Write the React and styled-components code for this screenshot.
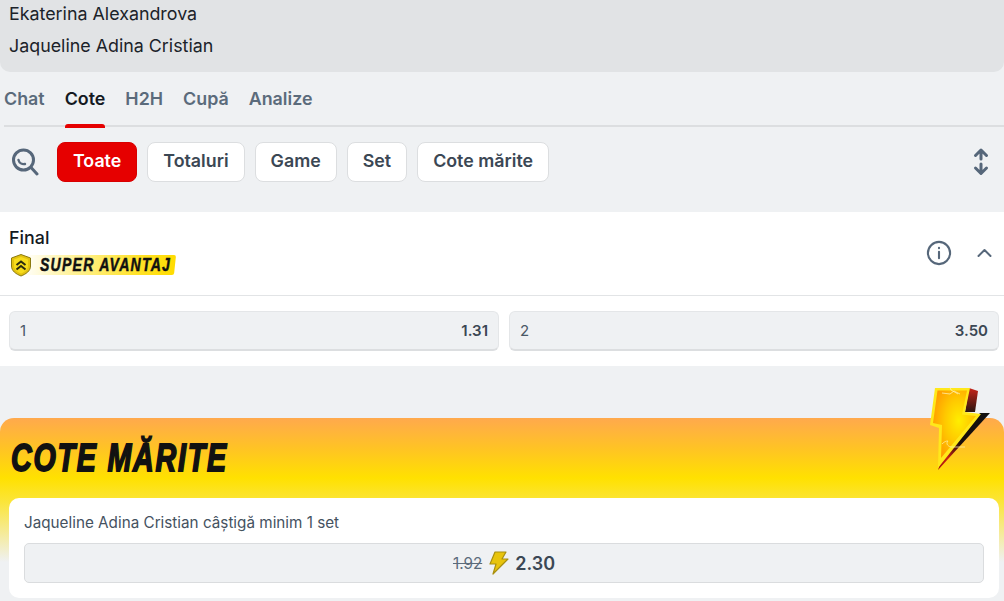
import React from "react";
import styled, { createGlobalStyle } from "styled-components";

const Global = createGlobalStyle`
  html, body { margin: 0; padding: 0; background: #eff1f3; }
  body { font-family: Inter, "Liberation Sans", sans-serif; overflow: hidden; }
  #root { width: 1004px; height: 601px; overflow: hidden; }
`;
const Page = styled.div`display: flex; flex-direction: column; width: 1004px; height: 601px; overflow: hidden; background: #eff1f3;`;
const Header = styled.header`
  height: 72px; flex: none; box-sizing: border-box; background: #e1e3e5; border-radius: 0 0 10px 10px;
  padding: 0 9px; display: flex; flex-direction: column; gap: 10px; color: #1b2229;
`;
const Player = styled.div`font-size: 17.85px; line-height: 22px; margin-top: ${p => p.$first ? "3px" : "0"};`;
const Tabs = styled.nav`
  height: 55px; flex: none; box-sizing: border-box; margin-left: 4px; border-bottom: 2px solid #dcdee0;
  display: flex; gap: 20px; align-items: flex-start;
`;
const Tab = styled.div`
  height: 55px; box-sizing: border-box; padding-top: 16px; position: relative; font-size: 17.85px; line-height: 22px; font-weight: 600;
  color: ${p => p.$active ? "#14191f" : "#5b6b7b"};
  ${p => p.$active && `&::after{content:"";position:absolute;left:0;right:0;bottom:-1px;height:4px;border-radius:3px 3px 0 0;background:#e50000;}`}
`;
const Filters = styled.div`
  height: 40px; flex: none; margin-top: 15px; display: flex; align-items: center; padding: 0 11px; gap: 10px;
`;
const SearchWrap = styled.div`width: 28px; height: 28px; margin-right: 8px; flex: none;`;
const Chip = styled.div`
  height: 40px; box-sizing: border-box; padding: 0 15px 4px; display: flex; align-items: center; border-radius: 8px; font-size: 17.82px; font-weight: 600;
  background: ${p => p.$active ? "#e60000" : "#fff"}; color: ${p => p.$active ? "#fff" : "#3b4754"};
  border: 1px solid ${p => p.$active ? "#d80000" : "#dcdee0"};
`;
const Sort = styled.div`margin-left: auto; margin-right: 2px; width: 20px; height: 30px; flex: none;`;
const Market = styled.section`margin-top: 30px; height: 154px; flex: none; background: #fff;`;
const MarketHead = styled.div`
  height: 84px; box-sizing: border-box; border-bottom: 1px solid #e2e4e6; padding: 15px 9px 0 9px; display: flex; justify-content: space-between;
`;
const MarketTitle = styled.div`font-size: 17.85px; line-height: 22px; font-weight: 500; color: #14191f;`;
const Badge = styled.div`
  margin-top: 5px; display: flex; align-items: center; height: 22px; width: 166px; position: relative;
`;
const BadgeStrip = styled.div`
  position: absolute; left: 14px; right: 0; top: 1px; bottom: 1px; transform: skewX(-6deg); border-radius: 2px;
  background: linear-gradient(90deg, rgba(255,222,0,0) 0%, #fff3a0 30%, #ffe22a 75%, #ffdc00 100%);
`;
const BadgeText = styled.span`
  position: relative; margin-left: 31px; display: inline-block; font-family: "Liberation Sans", sans-serif; font-style: italic; font-weight: 700;
  font-size: 18px; line-height: 22px; color: #111; letter-spacing: 1.6px; -webkit-text-stroke: 0.5px #111; white-space: nowrap; transform: scaleX(0.78); transform-origin: left center;
`;
const HeadIcons = styled.div`display: flex; align-items: center; gap: 19px; height: 52px; margin-right: -1px;`;
const OddsRow = styled.div`display: flex; gap: 10px; padding: 15px 5px 0 9px;`;
const Odd = styled.div`
  flex: 1; height: 40px; box-sizing: border-box; background: #eff1f3; border: 1px solid #e4e6e8; border-bottom: 2px solid #dcdee0; border-radius: 6px; padding: 0 10px;
  display: flex; align-items: center; justify-content: space-between; font-size: 15px; color: #4a5866;
`;
const OddValue = styled.span`font-weight: 600; color: #3b4754;`;
const Boost = styled.section`
  margin-top: 52px; height: 200px; flex: none; position: relative; border-radius: 14px 14px 0 0;
  background: linear-gradient(180deg, #ffa94d 0%, #ffc325 15%, #ffe100 30%, #fbe53a 42%, #f5eb9c 58%, #eff1f3 72%);
  padding: 0 5px 0 9px;
`;
const BoostTitleRow = styled.div`height: 80px; display: flex; align-items: center;`;
const BoostTitle = styled.h2`
  margin: 0 0 0 2px; font-family: "Liberation Sans", sans-serif; font-style: italic; font-weight: 700; font-size: 39px; line-height: 44px; color: #111;
  letter-spacing: 2.4px; -webkit-text-stroke: 1.8px #111; white-space: nowrap; transform: scaleX(0.735); transform-origin: left center;
`;
const Bolt = styled.svg`position: absolute; right: 12px; top: -34px; width: 70px; height: 86px;`;
const BoostCard = styled.div`
  background: #fff; border-radius: 10px; box-sizing: border-box; height: 100px; padding: 15px; display: flex; flex-direction: column;
`;
const BoostLabel = styled.div`font-size: 15.25px; line-height: 20px; color: #45525f;`;
const BoostButton = styled.div`
  margin-top: 10px; height: 40px; box-sizing: border-box; background: #eff1f3; border: 1px solid #dadcde; border-radius: 5px; display: flex; align-items: center; justify-content: center; gap: 6px;
`;
const Old = styled.span`font-size: 15.25px; color: #5b6b7b; text-decoration: line-through; margin-right: 1px;`;
const New = styled.span`font-size: 18px; font-weight: 600; color: #3b4754;`;

const Stroke = ({ children, size = 24, w = 2 }) => (
  <svg width={size} height={size} viewBox="0 0 24 24" fill="none" stroke="#56677a" strokeWidth={w} strokeLinecap="round" strokeLinejoin="round">{children}</svg>
);

export default function App() {
  return (
    <Page>
      <Global />
      <Header>
        <Player $first>Ekaterina Alexandrova</Player>
        <Player>Jaqueline Adina Cristian</Player>
      </Header>
      <Tabs>
        <Tab>Chat</Tab><Tab $active>Cote</Tab><Tab>H2H</Tab><Tab>Cupă</Tab><Tab>Analize</Tab>
      </Tabs>
      <Filters>
        <SearchWrap>
          <svg width="28" height="28" viewBox="0 0 28 28" fill="none" stroke="#56677a" strokeLinecap="round">
            <circle cx="12.5" cy="12" r="10" strokeWidth="3" />
            <path d="M7.500 12a5.500 5.500 0 0 0 6.500 4" strokeWidth="2.400" />
            <path d="M20.500 20l5.500 6" strokeWidth="3" />
          </svg>
        </SearchWrap>
        <Chip $active>Toate</Chip><Chip>Totaluri</Chip><Chip>Game</Chip><Chip>Set</Chip><Chip>Cote mărite</Chip>
        <Sort>
          <svg width="20" height="30" viewBox="0 0 20 30" fill="none" stroke="#56677a" strokeWidth="3" strokeLinecap="round" strokeLinejoin="round">
            <path d="M10 12V3M4.500 8.500L10 3l5.500 5.500" />
            <path d="M10 17v9M4.500 21L10 26.500 15.500 21" />
          </svg>
        </Sort>
      </Filters>
      <Market>
        <MarketHead>
          <div>
            <MarketTitle>Final</MarketTitle>
            <Badge>
              <BadgeStrip />
              <svg width="24" height="24" viewBox="0 0 24 24" style={{ position: "absolute", left: 0, top: -1 }}>
                <path d="M12 1.500l9.500 3.500v8c0 5-4.500 8-9.500 10C7 21 2.500 18 2.500 13V5z" fill="#e3c20f" stroke="#8a7a10" strokeWidth="1" />
                <path d="M12 4l7 2.500v6.500c0 3.500-3.500 6-7 7.500-3.500-1.500-7-4-7-7.500V6.500z" fill="#f7dc1c" />
                <path d="M7.500 12L12 8.500l4.500 3.500M7.500 16.500L12 13l4.500 3.500" fill="none" stroke="#2a2a10" strokeWidth="2" />
              </svg>
              <BadgeText>SUPER AVANTAJ</BadgeText>
            </Badge>
          </div>
          <HeadIcons>
            <Stroke size={28} w={1.800}>
              <circle cx="12" cy="12" r="9.500" />
              <path d="M12 11v5.500M12 7.500v.4" />
            </Stroke>
            <Stroke size={24} w={2}>
              <path d="M6.500 15l6-6 6 6" />
            </Stroke>
          </HeadIcons>
        </MarketHead>
        <OddsRow>
          <Odd><span>1</span><OddValue>1.31</OddValue></Odd>
          <Odd><span>2</span><OddValue>3.50</OddValue></Odd>
        </OddsRow>
      </Market>
      <Boost>
        <Bolt viewBox="0 0 70 86">
          <defs>
            <radialGradient id="bf" cx="0.6" cy="0.45" r="0.65">
              <stop offset="0" stopColor="#ffee00" />
              <stop offset="0.5" stopColor="#ffc800" />
              <stop offset="1" stopColor="#ff9a00" />
            </radialGradient>
            <linearGradient id="edge" x1="1" y1="0" x2="0" y2="1">
              <stop offset="0" stopColor="#111" />
              <stop offset="0.55" stopColor="#1a0d08" />
              <stop offset="0.8" stopColor="#c81f12" />
              <stop offset="1" stopColor="#a3150d" />
            </linearGradient>
            <linearGradient id="top" x1="0" y1="0" x2="0" y2="1">
              <stop offset="0" stopColor="#c8261a" />
              <stop offset="1" stopColor="#2a1510" />
            </linearGradient>
          </defs>
          <path d="M47 4l9 3-3 21H43z" fill="url(#top)" />
          <path d="M58 29h10L16 86l5-15z" fill="url(#edge)" />
          <path d="M13 4h35L43 28l16 2L16 84l1-40-9-3z" fill="#ffe81a" />
          <path d="M15.500 6.500h29.500l-5 24 14 1.500L19 74l1-33-9-2z" fill="url(#bf)" />
          <path d="M20 9l8 1 4-3 6 3M27 1l2 5 7 4" fill="none" stroke="#fff6c0" strokeWidth="0.700" />
          <path d="M20 60c3-3 5-3 6-3-2 2-1 5 3 6h14" fill="none" stroke="#fff4b0" strokeWidth="0.700" />
        </Bolt>
        <BoostTitleRow><BoostTitle>COTE MĂRITE</BoostTitle></BoostTitleRow>
        <BoostCard>
          <BoostLabel>Jaqueline Adina Cristian câștigă minim 1 set</BoostLabel>
          <BoostButton>
            <Old>1.92</Old>
            <svg width="20" height="24" viewBox="0 0 20 24">
              <path d="M6 1h11l-4 7h6L4 23l3-10H1z" fill="#e8c40c" stroke="#a88f10" strokeWidth="1.200" strokeLinejoin="round" />
            </svg>
            <New>2.30</New>
          </BoostButton>
        </BoostCard>
      </Boost>
    </Page>
  );
}
